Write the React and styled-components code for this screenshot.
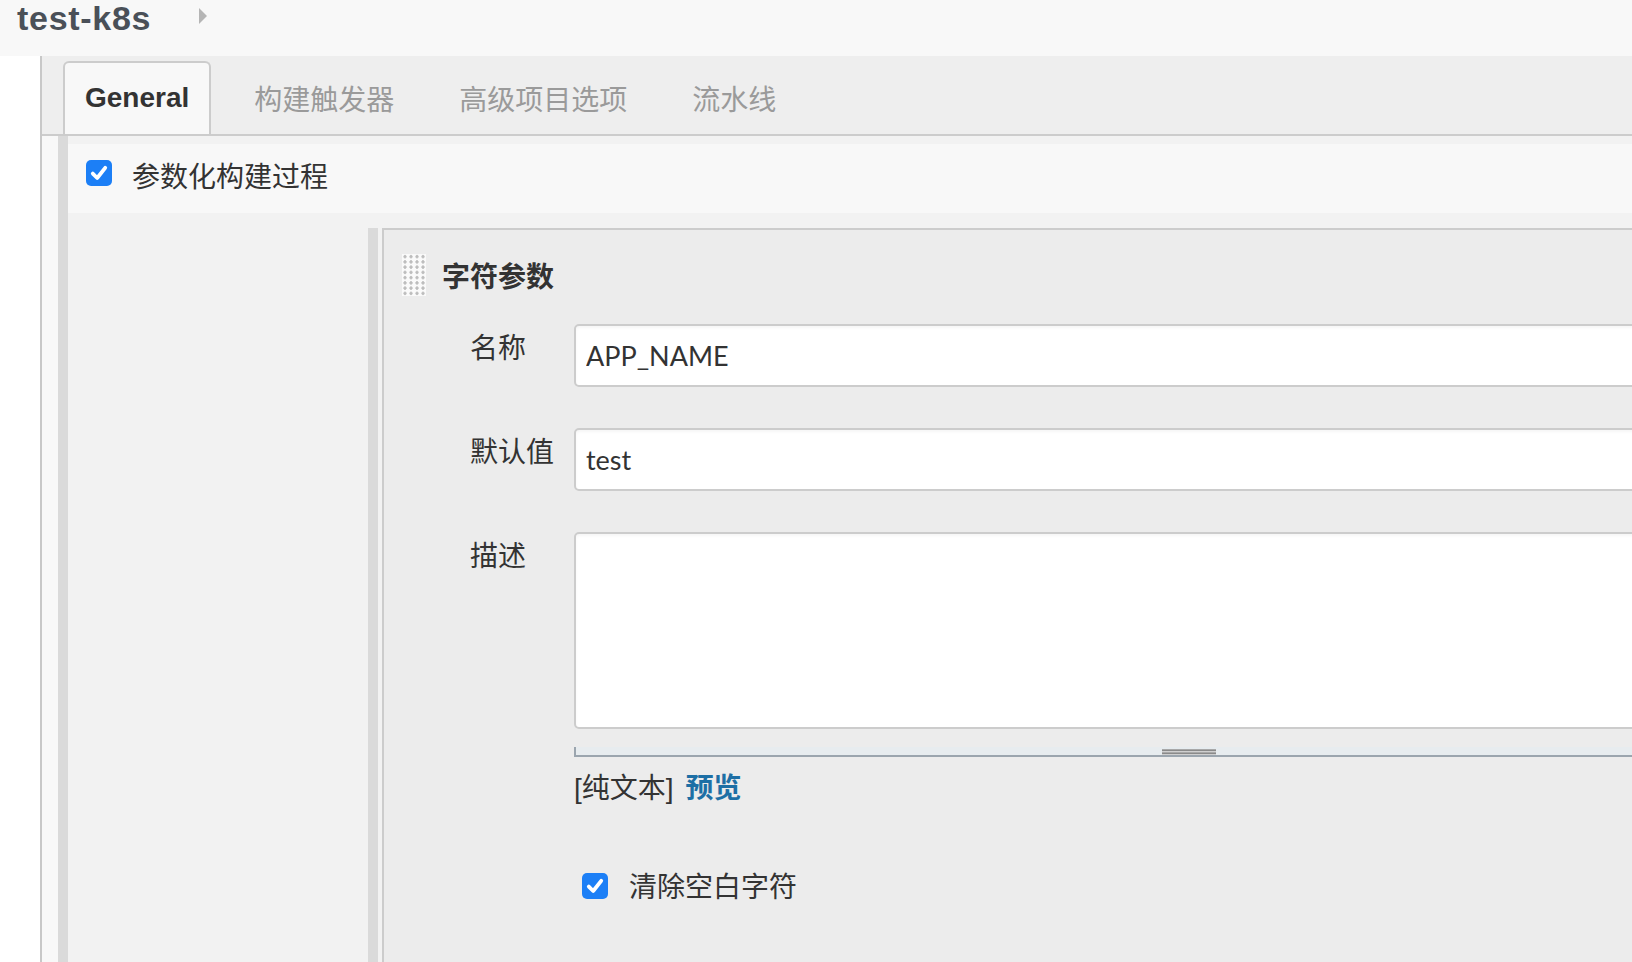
import styled, { createGlobalStyle } from 'styled-components';

const GlobalStyle = createGlobalStyle`
  html, body {
    margin: 0;
    padding: 0;
    height: 100%;
    overflow: hidden;
  }
  body {
    background: #fff;
    color: #333;
    font-family: 'Liberation Sans', 'Noto Sans CJK SC', sans-serif;
  }
  #root {
    height: 100%;
  }
`

const Page = styled.div`
  display: flex;
  flex-direction: column;
  height: 100vh;
`
const TopBar = styled.header`
  height: 56px;
  flex-shrink: 0;
  background: #f8f8f8;
  display: flex;
  align-items: flex-start;
  padding-left: 17px;
`
const JobName = styled.h1`
  margin: 1px 0 0;
  font: bold 34px/34px 'Liberation Sans', sans-serif;
  letter-spacing: 0.7px;
  color: #4a5058;
`
const Crumb = styled.span`
  margin: 8px 0 0 48px;
  width: 0;
  height: 0;
  border-left: 8px solid #b5b5b5;
  border-top: 8px solid transparent;
  border-bottom: 8px solid transparent;
`
const Main = styled.div`
  flex: 1;
  display: flex;
  min-height: 0;
`
const Gutter = styled.div`
  width: 40px;
  flex-shrink: 0;
  background: #fff;
`
const Panel = styled.div`
  flex: 1;
  min-width: 0;
  display: flex;
  flex-direction: column;
  border-left: 2px solid #c8c8c8;
  background: #f8f8f8;
`
const TabBar = styled.nav`
  height: 80px;
  box-sizing: border-box;
  flex-shrink: 0;
  display: flex;
  padding: 5px 0 0 21px;
  background: #eeeeee;
  border-bottom: 2px solid #cccccc;
`
const Tab = styled.div`
  display: flex;
  align-items: center;
  padding: 0 20px 2px;
  margin-right: 21px;
  font-size: 28px;
  border: 2px solid ${p => (p.$active ? '#cccccc' : 'transparent')};
  border-bottom: none;
  border-radius: 6px 6px 0 0;
  background: ${p => (p.$active ? '#f8f8f8' : 'transparent')};
  color: ${p => (p.$active ? '#333' : '#9a9a9a')};
  font-weight: ${p => (p.$active ? 'bold' : 'normal')};
`
const Content = styled.div`
  flex: 1;
  display: flex;
  padding-left: 16px;
  min-height: 0;
`
const Section = styled.section`
  flex: 1;
  display: flex;
  flex-direction: column;
  border-left: 10px solid #dadada;
  background: #f2f2f2;
  padding-top: 8px;
  min-width: 0;
`
const OptionRow = styled.div`
  height: 69px;
  box-sizing: border-box;
  flex-shrink: 0;
  display: flex;
  align-items: center;
  gap: 20px;
  padding: 0 0 7px 18px;
  background: #f8f8f8;
  font-size: 28px;
`
const Box = styled.span`
  width: 26px;
  height: 26px;
  flex-shrink: 0;
  margin-bottom: 4px;
  border-radius: 5px;
  background: #1c7ff6;
  display: flex;
  align-items: center;
  justify-content: center;
`
const ParamArea = styled.div`
  flex: 1;
  display: flex;
  padding-top: 15px;
  min-height: 0;
`
const Spacer = styled.div`
  width: 300px;
  flex-shrink: 0;
`
const Repeated = styled.div`
  flex: 1;
  display: flex;
  border-left: 10px solid #dadada;
  padding-left: 4px;
  margin-right: -80px;
`
const Card = styled.div`
  flex: 1;
  border: 2px solid #cccccc;
  border-bottom: none;
  background: #ececec;
  padding: 24px 0 0 18px;
`
const CardHead = styled.div`
  display: flex;
  align-items: center;
  gap: 16px;
  height: 42px;
`
const Handle = styled.span`
  width: 24px;
  height: 42px;
  background-color: #fafafa;
  background-image: radial-gradient(circle, #bdbdbd 1.3px, transparent 2px);
  background-size: 6px 5.25px;
`
const CardTitle = styled.h2`
  margin: 0;
  font-size: 28px;
  font-weight: bold;
  color: #333;
`
const Fields = styled.div`
  margin-top: 28px;
  padding-left: 68px;
`
const FieldRow = styled.div`
  display: flex;
  margin-bottom: 41px;
`
const Label = styled.label`
  width: 104px;
  flex-shrink: 0;
  padding-top: 7px;
  font-size: 28px;
  line-height: 36px;
  color: #333;
`
const Control = styled.div`
  flex: 1;
  min-width: 0;
`
const TextInput = styled.input`
  display: block;
  width: 100%;
  height: 63px;
  box-sizing: border-box;
  border: 2px solid #cccccc;
  border-radius: 5px;
  background: #fff;
  box-shadow: inset 0 2px 3px rgba(0, 0, 0, 0.04);
  padding: 0 10px;
  font: 27px 'Lato', 'Liberation Sans', sans-serif;
  color: #333;
  outline: none;
`
const TextArea = styled.textarea`
  display: block;
  width: 100%;
  height: 197px;
  box-sizing: border-box;
  border: 2px solid #cccccc;
  border-radius: 5px;
  background: #fff;
  box-shadow: inset 0 2px 3px rgba(0, 0, 0, 0.04);
  resize: none;
  outline: none;
`
const ResizeBar = styled.div`
  margin-top: 18px;
  height: 10px;
  box-sizing: border-box;
  background: #e7ecef;
  border-left: 2px solid #9ba5ae;
  border-bottom: 2px solid #9ba5ae;
  padding-top: 2px;
`
const Grip = styled.div`
  margin-left: 586px;
  width: 54px;
  height: 6px;
  background: repeating-linear-gradient(to bottom, #a8a8a8 0 1px, #8a8a8a 1px 2px, #cfcfcf 2px 3px);
`
const Help = styled.div`
  margin-top: 14px;
  font-size: 28px;
  line-height: 36px;
  color: #333;
  a {
    margin-left: 12px;
    color: #1d6fa5;
    font-weight: bold;
    text-decoration: none;
  }
`
const CheckRow = styled.div`
  display: flex;
  align-items: center;
  gap: 21px;
  margin: 63px 0 0 112px;
  font-size: 28px;
  line-height: 36px;
  color: #333;
`

function Check() {
  return (
    <Box>
      <svg width="20" height="20" viewBox="0 0 20 20">
        <path d="M3.8 10.6 L8.2 15 L16.2 4.8" fill="none" stroke="#fff" strokeWidth="3.8" strokeLinecap="round" strokeLinejoin="round" />
      </svg>
    </Box>
  );
}

const tabs = ['General', '构建触发器', '高级项目选项', '流水线'];

export default function App() {
  return (
    <Page>
      <GlobalStyle />
      <TopBar>
        <JobName>test-k8s</JobName>
        <Crumb />
      </TopBar>
      <Main>
        <Gutter />
        <Panel>
          <TabBar>
            {tabs.map((t, i) => (
              <Tab key={t} $active={i === 0}>{t}</Tab>
            ))}
          </TabBar>
          <Content>
            <Section>
              <OptionRow>
                <Check />
                <span>参数化构建过程</span>
              </OptionRow>
              <ParamArea>
                <Spacer />
                <Repeated>
                  <Card>
                    <CardHead>
                      <Handle />
                      <CardTitle>字符参数</CardTitle>
                    </CardHead>
                    <Fields>
                      <FieldRow>
                        <Label>名称</Label>
                        <Control>
                          <TextInput defaultValue="APP_NAME" />
                        </Control>
                      </FieldRow>
                      <FieldRow>
                        <Label>默认值</Label>
                        <Control>
                          <TextInput defaultValue="test" />
                        </Control>
                      </FieldRow>
                      <FieldRow>
                        <Label>描述</Label>
                        <Control>
                          <TextArea />
                          <ResizeBar>
                            <Grip />
                          </ResizeBar>
                          <Help>[纯文本]<a href="#">预览</a></Help>
                        </Control>
                      </FieldRow>
                      <CheckRow>
                        <Check />
                        <span>清除空白字符</span>
                      </CheckRow>
                    </Fields>
                  </Card>
                </Repeated>
              </ParamArea>
            </Section>
          </Content>
        </Panel>
      </Main>
    </Page>
  );
}
